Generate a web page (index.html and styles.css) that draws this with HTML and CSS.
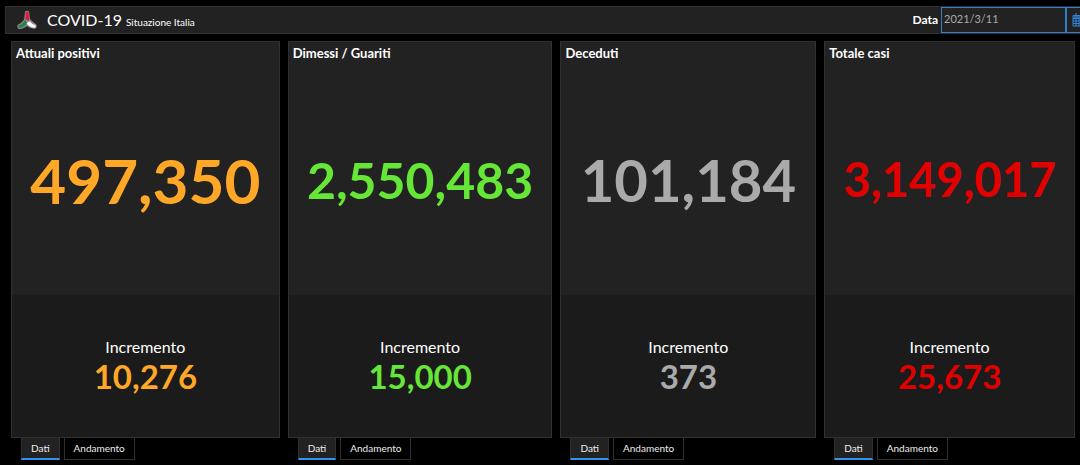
FILE: index.html
```html
<!DOCTYPE html>
<html lang="it">
<head>
<meta charset="utf-8">
<meta name="viewport" content="width=device-width, initial-scale=1">
<title>COVID-19 Situazione Italia</title>
<link rel="stylesheet" href="styles.css">
</head>
<body>
<header class="topbar">
  <svg class="logo" viewBox="0 0 20 20" aria-hidden="true">
    <path d="M8 1.500Q10 0 12 1.500L13 9Q15.500 12 19.500 14.400Q20.500 18 18 18.800Q12.500 18.200 10 15.900Q6.500 19 1.500 19Q-.5 17.500 .8 14.800Q6 12.500 7.300 8.500Z" fill="#8d8989"/>
    <path d="M8.700 2Q10 .8 11.300 2L12.300 10.500L8.500 9.500Z" fill="#e5173f"/>
    <path d="M8 10L10.500 13.200Q7 17.800 1.800 18Q.8 17 1.700 15.500Q6.300 13.800 8 10Z" fill="#27834b"/>
    <path d="M9.500 13.300L12.400 11.200Q14.700 14 18.600 15.200Q19 17.400 17.500 18Q12 17 9.500 13.300Z" fill="#fff"/>
  </svg>
  <h1 class="title">COVID-19</h1>
  <span class="subtitle">Situazione Italia</span>
  <div class="date-picker">
    <label class="date-label" for="date">Data</label>
    <input class="date-input" id="date" type="text" value="2021/3/11">
    <button class="date-button" type="button" aria-label="Apri calendario">
      <svg class="calendar" viewBox="0 0 14 14" aria-hidden="true">
        <path d="M1 2.500H13V13H1ZM1 5.500H13M1 8H13M1 10.500H13M4 5.500V13M7 5.500V13M10 5.500V13M4 0V3.500M10 0V3.500" fill="none" stroke="#2f86dc"/>
        <path d="M1 3H13V5H1Z" fill="#2a65a0"/>
      </svg>
    </button>
  </div>
</header>
<main class="board">
  <section class="column active-cases">
    <div class="card">
      <div class="total"><h2 class="heading">Attuali positivi</h2><p class="figure">497,350</p></div>
      <div class="increase"><p class="caption">Incremento</p><p class="delta">10,276</p></div>
    </div>
    <div class="tabs"><button class="tab selected" type="button">Dati</button><button class="tab" type="button">Andamento</button></div>
  </section>
  <section class="column recovered">
    <div class="card">
      <div class="total"><h2 class="heading">Dimessi / Guariti</h2><p class="figure">2,550,483</p></div>
      <div class="increase"><p class="caption">Incremento</p><p class="delta">15,000</p></div>
    </div>
    <div class="tabs"><button class="tab selected" type="button">Dati</button><button class="tab" type="button">Andamento</button></div>
  </section>
  <section class="column deaths">
    <div class="card">
      <div class="total"><h2 class="heading">Deceduti</h2><p class="figure">101,184</p></div>
      <div class="increase"><p class="caption">Incremento</p><p class="delta">373</p></div>
    </div>
    <div class="tabs"><button class="tab selected" type="button">Dati</button><button class="tab" type="button">Andamento</button></div>
  </section>
  <section class="column all-cases">
    <div class="card">
      <div class="total"><h2 class="heading">Totale casi</h2><p class="figure">3,149,017</p></div>
      <div class="increase"><p class="caption">Incremento</p><p class="delta">25,673</p></div>
    </div>
    <div class="tabs"><button class="tab selected" type="button">Dati</button><button class="tab" type="button">Andamento</button></div>
  </section>
</main>
</body>
</html>
```

FILE: styles.css
```css
* { box-sizing: border-box; }

body {
  display: flex;
  flex-direction: column;
  gap: 7px;
  min-height: 100vh;
  margin: 0;
  padding: 6px 0 5px 5px;
  background: #000;
  color: #fff;
  font-family: Lato, "Open Sans", sans-serif;
}

h1, h2, p { margin: 0; }

button, input { font: inherit; }

.topbar {
  display: flex;
  align-items: center;
  height: 28px;
  padding-left: 11px;
  overflow: hidden;
  background: #222;
  border: 1px solid #303030;
  border-right: 0;
}

.logo { width: 20px; height: 20px; margin-right: 10px; }

.title { padding-bottom: 2px; margin-right: 4px; font-size: 16px; font-weight: 400; }

.subtitle { padding-top: 3px; font-size: 10px; }

.date-picker {
  display: flex;
  align-items: center;
  align-self: stretch;
  margin-left: auto;
}

.date-label { padding-bottom: 1px; margin-right: 3px; font-size: 12px; font-weight: 700; }

.date-input {
  width: 125px;
  height: 26px;
  padding: 0 2px 3px;
  background: #222;
  border: 1px solid #2f80cc;
  border-radius: 0;
  color: #aaa;
  font-size: 11px;
}

.date-button {
  width: 14px;
  height: 26px;
  padding: 0 0 0 5px;
  overflow: hidden;
  background: #222;
  border: 1px solid #2f80cc;
  border-right: 0;
}

.calendar { display: block; width: 14px; height: 14px; }

.board {
  display: grid;
  flex: 1;
  grid-template-columns: 269fr 265fr 256fr 251fr;
  gap: 8px;
  padding: 0 5px 0 6px;
}

.column { display: flex; flex-direction: column; min-width: 0; }

.card {
  display: grid;
  flex: 1;
  grid-template-rows: 254fr 142fr;
  background: #1b1b1b;
  border: 1px solid #303030;
}

.total { display: flex; flex-direction: column; background: #222; }

.heading {
  padding: 3px 4px 5px;
  font-size: 13px;
  font-weight: 700;
  line-height: 16px;
}

.figure {
  display: flex;
  flex: 1;
  align-items: center;
  justify-content: center;
  padding-bottom: 2px;
  font-weight: 700;
  line-height: 1;
}

.increase {
  display: flex;
  flex-direction: column;
  align-items: center;
  justify-content: center;
}

.caption { font-size: 16px; line-height: 20px; }

.delta { font-size: 33px; font-weight: 700; line-height: 38px; }

.active-cases .figure { font-size: 62px; }
.recovered .figure { font-size: 50px; }
.deaths .figure { font-size: 58px; }
.all-cases .figure { font-size: 47px; }

.active-cases :is(.figure, .delta) { color: #ffa727; }
.recovered :is(.figure, .delta) { color: #66e738; }
.deaths :is(.figure, .delta) { color: #aaa; }
.all-cases :is(.figure, .delta) { color: #e10000; }

.tabs { display: flex; gap: 4px; height: 22px; padding-left: 10px; }

.tab {
  padding: 0 9px 1px;
  background: #000;
  border: 1px solid #303030;
  border-top: 0;
  color: #eee;
  font-size: 10px;
}

.selected {
  background: #222;
  border-bottom: 2px solid #2f94f0;
  padding-bottom: 0;
}
```
